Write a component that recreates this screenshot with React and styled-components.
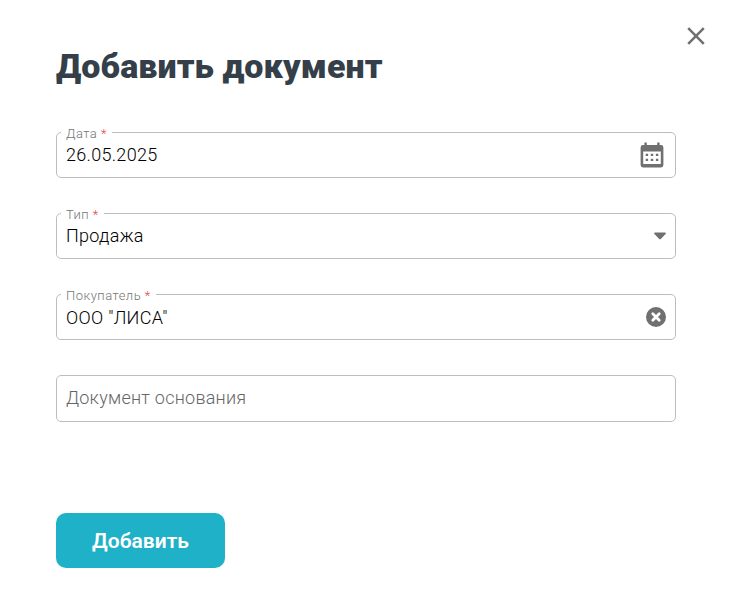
import React, { useState } from "react";
import styled, { createGlobalStyle } from "styled-components";

const App = () => {
  const [type, setType] = useState("Продажа");
  const [buyer, setBuyer] = useState('ООО "ЛИСА"');

  return (
    <>
      <GlobalStyle />
      <Modal>
        <CloseButton type="button" aria-label="Закрыть">
          <CloseIcon />
        </CloseButton>
        <Title>Добавить документ</Title>
        <Form>
          <Field label="Дата" required>
            <Value>26.05.2025</Value>
            <IconBox $right={11}>
              <CalendarIcon />
            </IconBox>
          </Field>
          <Field label="Тип" required>
            <Value onClick={() => setType("Продажа")}>{type}</Value>
            <IconBox $right={9}>
              <ArrowIcon />
            </IconBox>
          </Field>
          <Field label="Покупатель" required>
            <Value $top={1}>{buyer}</Value>
            <IconBox $right={9} onClick={() => setBuyer("")}>
              <ClearIcon />
            </IconBox>
          </Field>
          <Field height={47}>
            <Placeholder>Документ основания</Placeholder>
          </Field>
        </Form>
        <SubmitButton type="button">Добавить</SubmitButton>
      </Modal>
    </>
  );
};

const Field = ({ label, required, height, children }) => (
  <FieldBox $height={height}>
    {label && (
      <Label>
        {label} {required && <span>*</span>}
      </Label>
    )}
    {children}
  </FieldBox>
);

const CloseIcon = () => (
  <svg width="20" height="20" viewBox="0 0 20 20">
    <path
      d="M2.2 2.2 17.8 17.8M17.8 2.2 2.2 17.8"
      stroke="#707070"
      strokeWidth="2.5"
      fill="none"
    />
  </svg>
);

const CalendarIcon = () => (
  <svg width="24" height="26" viewBox="0 0 24 26">
    <path
      fill="#707070"
      fillRule="evenodd"
      d="M4.400 0.500h2.400v2.500h10.400V0.500h2.400V3H21a2.400 2.400 0 0 1 2.400 2.400V23a2.400 2.400 0 0 1-2.400 2.400H3A2.400 2.400 0 0 1 .6 23V5.400A2.400 2.400 0 0 1 3 3h1.400zM3.200 9.500v12.500h17.600V9.500z"
    />
    <path
      fill="#707070"
      d="M5.700 11.700h2.400v2.400H5.700zM10.800 11.700h2.400v2.400h-2.400zM15.900 11.700h2.400v2.400h-2.400zM5.700 16.700h2.400v2.400H5.700zM10.800 16.700h2.400v2.400h-2.400zM15.900 16.700h2.400v2.400h-2.400z"
    />
  </svg>
);

const ArrowIcon = () => (
  <svg width="12" height="8" viewBox="0 0 12 8">
    <path
      d="M1 .5h10c.8 0 1.200.8.6 1.400L6.800 6.900c-.4.500-1.200.5-1.600 0L.4 1.900C-.2 1.300.2.5 1 .5z"
      fill="#707070"
    />
  </svg>
);

const ClearIcon = () => (
  <svg width="20" height="20" viewBox="0 0 20 20">
    <circle cx="10" cy="10" r="10" fill="#707070" />
    <path
      d="m6.800 6.800 6.400 6.400m0-6.400-6.400 6.400"
      stroke="#fff"
      strokeWidth="2.800"
      strokeLinecap="round"
    />
  </svg>
);

const GlobalStyle = createGlobalStyle`
  * {
    box-sizing: border-box;
  }
  body {
    margin: 0;
    background: #fff;
    font-family: Roboto, "Noto Sans", sans-serif;
  }
`;

const Modal = styled.div`
  position: relative;
  width: 734px;
  height: 612px;
  padding: 45px 58px 0 56px;
  background: #fff;
`;

const CloseButton = styled.button`
  position: absolute;
  top: 26px;
  right: 28px;
  display: flex;
  padding: 0;
  border: none;
  background: none;
  cursor: pointer;
`;

const Title = styled.h1`
  margin: 0;
  font-size: 34px;
  font-weight: 900;
  line-height: 42px;
  letter-spacing: 0.07px;
  color: #343f49;
`;

const Form = styled.div`
  display: flex;
  flex-direction: column;
  gap: 35px;
  margin-top: 45px;
`;

const FieldBox = styled.div`
  position: relative;
  display: flex;
  align-items: center;
  justify-content: space-between;
  width: 620px;
  height: ${(props) => props.$height || 46}px;
  padding-left: 9px;
  border: 1px solid #bdbdbd;
  border-radius: 5px;
`;

const Label = styled.label`
  position: absolute;
  top: -7px;
  left: 4px;
  padding: 0 5px;
  background: #fff;
  font-size: 13px;
  font-weight: 300;
  line-height: 16px;
  letter-spacing: 0.48px;
  color: #757575;
  white-space: nowrap;

  span {
    color: #e0493f;
  }
`;

const Value = styled.span`
  padding-top: ${(props) => props.$top || 0}px;
  font-size: 18px;
  font-weight: 300;
  line-height: 24px;
  letter-spacing: 0.3px;
  color: #000;
`;

const Placeholder = styled(Value)`
  padding-bottom: 1px;
  letter-spacing: 0.25px;
  color: #666;
`;

const IconBox = styled.div`
  display: flex;
  margin-right: ${(props) => props.$right}px;
  cursor: pointer;
`;

const SubmitButton = styled.button`
  width: 169px;
  height: 55px;
  margin-top: 91px;
  padding: 0;
  border: none;
  border-radius: 10px;
  background: #1fb1c7;
  font-family: inherit;
  font-size: 21px;
  font-weight: 600;
  color: #fff;
  cursor: pointer;
`;

export default App;
